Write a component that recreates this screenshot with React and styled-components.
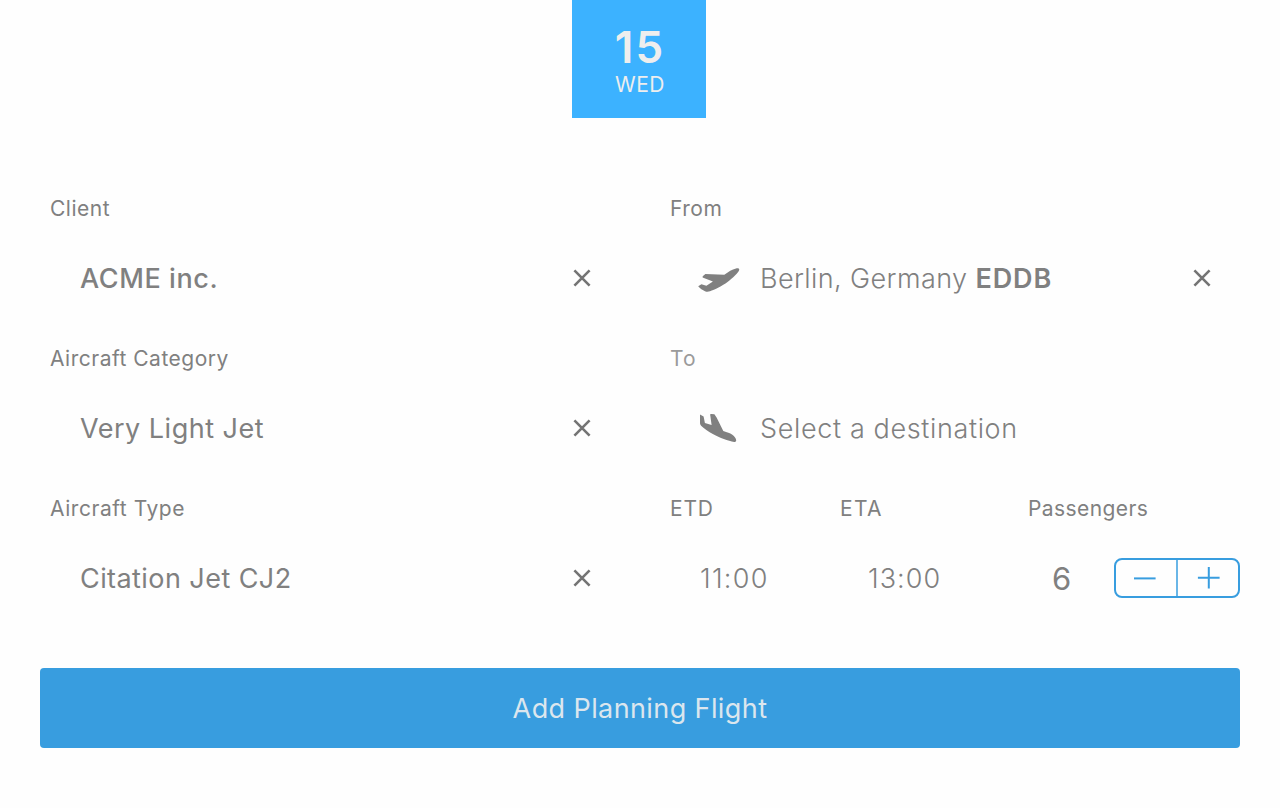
import React from "react";
import styled, { createGlobalStyle } from "styled-components";

const GlobalStyle = createGlobalStyle`
  *, *::before, *::after { box-sizing: border-box; }
  body { margin: 0; background: #fefefe; color: #808080; font-family: Inter, "Liberation Sans", sans-serif; -webkit-font-smoothing: antialiased; }
  button { font: inherit; color: inherit; border: 0; padding: 0; background: none; }
`;

const Page = styled.main`
  width: 1280px;
  height: 808px;
  overflow: hidden;
`;

const DateTile = styled.header`
  width: 134px;
  height: 118px;
  margin-left: 572px;
  padding-top: 24px;
  display: flex;
  flex-direction: column;
  align-items: center;
  background: #3cb2ff;
  color: #eee;
`;

const Day = styled.strong`
  padding-left: 2px;
  font-size: 44px;
  line-height: 46px;
  font-weight: 600;
  letter-spacing: 2px;
`;

const Weekday = styled.span`
  padding-left: 2px;
  font-size: 21px;
  line-height: 30px;
  font-weight: 400;
  letter-spacing: 0.5px;
`;

const Form = styled.form`
  padding: 70px 40px 0;
`;

const Columns = styled.div`
  display: grid;
  grid-template-columns: 580px 580px;
  column-gap: 40px;
`;

const Field = styled.div`
  height: 150px;
`;

const Label = styled.label`
  display: block;
  height: 40px;
  padding-left: 10px;
  font-size: 21px;
  line-height: 41px;
  letter-spacing: ${(p) => p.$track ?? 0.5}px;
  color: ${(p) => (p.$muted ? "#9b9b9b" : "#808080")};
`;

const Value = styled.div`
  display: flex;
  align-items: center;
  height: 100px;
  padding-left: ${(p) => p.$indent ?? 40}px;
  font-size: 27px;
  font-weight: ${(p) => p.$weight || 400};
  letter-spacing: ${(p) => p.$track ?? 0.5}px;
  white-space: pre;

  b { font-weight: 600; letter-spacing: 0.9px; }
`;

const Clear = styled.button`
  display: flex;
  margin-left: auto;
  margin-right: 28px;
`;

const IconSlot = styled.span`
  display: flex;
  width: 62px;
`;

const Schedule = styled.div`
  display: grid;
  grid-template-columns: 170px 188px 222px;
`;

const Count = styled.span`
  width: 62px;
  padding-top: 1px;
  font-size: 31px;
`;

const Stepper = styled.div`
  display: flex;
  width: 126px;
  height: 40px;
  border: 2px solid #389ddf;
  border-radius: 8px;
  color: #389ddf;
`;

const Step = styled.button`
  width: 60px;
  display: flex;
  align-items: center;
  justify-content: center;

  & + & { width: 62px; border-left: 2px solid #6ab6e7; }
`;

const Submit = styled.button`
  display: block;
  width: 1200px;
  height: 80px;
  margin-top: 30px;
  border-radius: 4px;
  background: #389ddf;
  && { color: #dbe6ee; font-size: 27px; font-weight: 400; letter-spacing: 0.4px; }
`;

const Cross = () => (
  <Clear type="button" aria-label="Clear">
    <svg width="20" height="20" viewBox="0 0 20 20" fill="none" stroke="#747474" strokeWidth="2.6">
      <path d="M2.4 2.4 17.6 17.6M17.6 2.4 2.4 17.6" />
    </svg>
  </Clear>
);

const TakeOff = () => (
  <svg width="44" height="28" viewBox="0 0 44 28" fill="#808080">
    <path d="M0.2 22.2 3.4 20.3 8.4 21.7 14.9 17.6 4.6 13.4 4.7 12.2 7.4 9.9 26.3 10.7C30.5 7.8 34 5.2 38 4.4C40 4 41.6 4.3 41.2 6C40.3 8.8 34.8 14 29.5 18C24.5 21.7 16.5 25.7 12 27.3C10.3 27.9 8.5 28 7 27.2C4.8 26.2 1.8 24.2 0.2 22.2Z" />
  </svg>
);

const Landing = () => (
  <svg width="44" height="30" viewBox="0 0 44 30" fill="#808080">
    <path d="M2 1.5 5.6 3.4 6.9 10 13.6 12.1 12.1 1.3 13.3 0.9 16.4 1.3 18.6 4.4 25.3 18.1C29.3 19.5 32 20.1 34 21.5C36.2 23.1 38.1 25.3 38.2 27.2C38.2 28.6 37.5 28.9 36.2 28.9C30.2 28.2 21.5 24.7 15.3 21.3C10.5 18.6 5.6 15.3 3.1 12.7C2 11.4 2 10.5 2 9.3Z" />
  </svg>
);

const Minus = () => (
  <svg width="24" height="24" viewBox="0 0 24 24" fill="none" stroke="currentColor" strokeWidth="2">
    <path d="M0 12.4H21.6" />
  </svg>
);

const Plus = () => (
  <svg width="24" height="24" viewBox="0 0 24 24" fill="none" stroke="currentColor" strokeWidth="2">
    <path d="M1.9 11.7H23.6M12.8 1V22.5" />
  </svg>
);

export default function App() {
  return (
    <Page>
      <GlobalStyle />
      <DateTile>
        <Day>15</Day>
        <Weekday>WED</Weekday>
      </DateTile>
      <Form>
        <Columns>
          <Field>
            <Label>Client</Label>
            <Value $weight={500} $track={0.6}>ACME inc.<Cross /></Value>
          </Field>
          <Field>
            <Label>From</Label>
            <Value $indent={38} $weight={300} $track={0.4}>
              <IconSlot><TakeOff /></IconSlot>
              <span>Berlin, Germany <b>EDDB</b></span>
              <Cross />
            </Value>
          </Field>
          <Field>
            <Label>Aircraft Category</Label>
            <Value $track={0.5}>Very Light Jet<Cross /></Value>
          </Field>
          <Field>
            <Label $muted $track={1.2}>To</Label>
            <Value $indent={38} $weight={300} $track={0.64}>
              <IconSlot><Landing /></IconSlot>
              <span>Select a destination</span>
            </Value>
          </Field>
          <Field>
            <Label $track={0.55}>Aircraft Type</Label>
            <Value $track={0.43}>Citation Jet CJ2<Cross /></Value>
          </Field>
          <Schedule>
            <Field>
              <Label $track={0.8}>ETD</Label>
              <Value $weight={300} $track={1.3}>11:00</Value>
            </Field>
            <Field>
              <Label $track={1.3}>ETA</Label>
              <Value $indent={38} $weight={300} $track={1.05}>13:00</Value>
            </Field>
            <Field>
              <Label $track={0.42}>Passengers</Label>
              <Value $indent={34}>
                <Count>6</Count>
                <Stepper>
                  <Step type="button" aria-label="Fewer passengers"><Minus /></Step>
                  <Step type="button" aria-label="More passengers"><Plus /></Step>
                </Stepper>
              </Value>
            </Field>
          </Schedule>
        </Columns>
        <Submit type="button">Add Planning Flight</Submit>
      </Form>
    </Page>
  );
}
